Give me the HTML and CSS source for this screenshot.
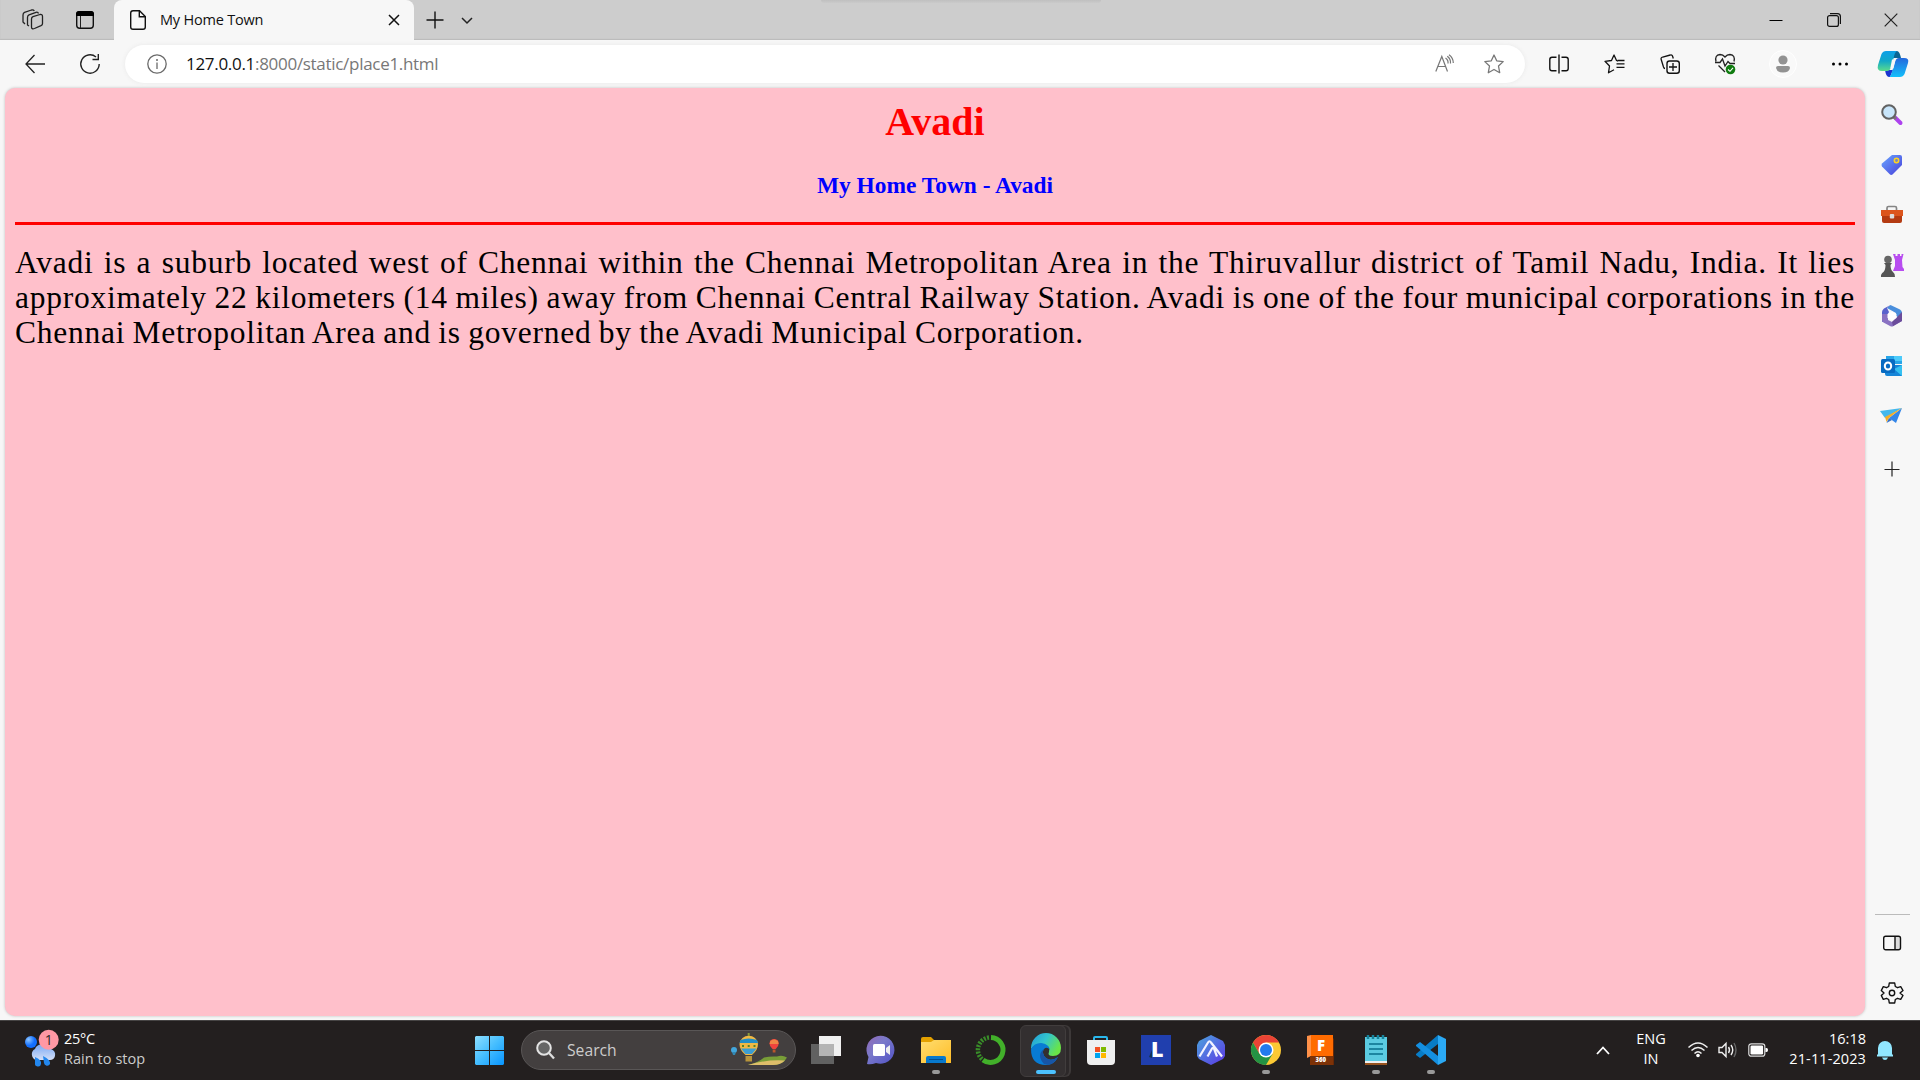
FILE: index.html
```html
<!DOCTYPE html>
<html lang="en">
<head>
<meta charset="utf-8">
<title>My Home Town</title>
<link rel="stylesheet" href="styles.css">
</head>
<body>
<div class="desktop">
  <header class="tabbar">
    <svg class="ic workspaces" width="22" height="22" viewBox="0 0 22 22"><g fill="none" stroke="#222" stroke-width="1.3" stroke-linejoin="round"><path d="M9.500 10Q9.500 8.300 11 7.700L18 5.500Q20.500 5 20.500 7.500V14.500Q20.500 16 19 16.700L12.500 19.500Q9.500 20.500 9.500 18Z"/><path d="M7 17 5.500 16V8.500Q5.500 6.500 7 5.800L14 3.300Q16 2.800 16.500 4.500M3 15 1 13V6Q1 4 2.500 3.300L9.500 1Q11.500.500 12.300 2"/></g></svg>
    <svg class="ic tabactions" width="20" height="20" viewBox="0 0 20 20"><rect x="1.700" y="1.700" width="16.600" height="16.600" rx="3" fill="none" stroke="#111" stroke-width="1.400"/><path d="M1 6V4Q1 1 4 1H16Q19 1 19 4V6Z"/><path d="M5.500 6V18" stroke="#222"/></svg>
    <div class="tab">
      <svg class="ic" width="18" height="22" viewBox="0 0 18 22"><path d="M4 1.700H10.500L16.300 7.500V18Q16.300 20.300 14 20.300H4Q1.700 20.300 1.700 18V4Q1.700 1.700 4 1.700ZM10.300 2V7.700H16" fill="none" stroke="#111" stroke-width="1.400"/></svg>
      <span class="tab-title">My Home Town</span>
      <svg class="ic" width="12" height="12" viewBox="0 0 12 12"><path d="M1 1 11 11M11 1 1 11" stroke="#111" stroke-width="1.500"/></svg>
    </div>
    <svg class="ic newtab" width="18" height="18" viewBox="0 0 18 18"><path d="M9 .500V17.500M.500 9H17.500" stroke="#111" stroke-width="1.400"/></svg>
    <svg class="ic tablist" width="12" height="8" viewBox="0 0 12 8"><path d="M1 1 6 6 11 1" fill="none" stroke="#222" stroke-width="1.500"/></svg>
    <div class="topshade"></div>
    <div class="wincontrols">
      <svg width="14" height="14" viewBox="0 0 14 14"><path d="M.500 7.500H13.500" stroke="#000"/></svg>
      <svg width="14" height="14" viewBox="0 0 14 14"><rect x=".600" y="2.600" width="10.800" height="10.800" rx="2" fill="none" stroke="#111" stroke-width="1.200"/><path d="M3 .600H10.500Q13.400.600 13.400 3.500V11" fill="none" stroke="#111" stroke-width="1.200"/></svg>
      <svg width="14" height="14" viewBox="0 0 14 14"><path d="M.700.700 13.300 13.300M13.300.700.700 13.300" stroke="#222" stroke-width="1.200"/></svg>
    </div>
  </header>

  <nav class="toolbar">
    <svg class="ic back" width="20" height="20" viewBox="0 0 20 20"><path d="M20 10H1M9.500 1 1 10 9.500 19" fill="none" stroke="#222" stroke-width="1.300"/></svg>
    <svg class="ic refresh" width="22" height="22" viewBox="0 0 22 22"><path d="M20.200 11A9.200 9.200 0 1 1 17 4M19.300 1V6.500H13.500" fill="none" stroke="#222" stroke-width="1.400"/></svg>
    <div class="address">
      <svg class="ic" width="20" height="20" viewBox="0 0 20 20"><circle cx="10" cy="10" r="9.200" fill="none" stroke="#6a6a6a" stroke-width="1.300"/><path d="M10 8.500V15" stroke="#6a6a6a" stroke-width="1.300"/><circle cx="10" cy="6" r="1" fill="#6a6a6a"/></svg>
      <span class="url"><b>127.0.0.1</b>:8000/static/place1.html</span>
      <svg class="ic" width="20" height="20" viewBox="0 0 20 20"><g fill="none" stroke="#777" stroke-width="1.200"><path d="M1.800 17.500 7.800 2.500 13.500 17.500M4 12.500H11.600M11.500 4Q14.500 6 14 9.500M13.300 2.200Q17 5 16.500 9.500M15 .800Q19.300 4 19.300 9"/></g></svg>
      <svg class="ic star" width="20" height="20" viewBox="0 0 20 20"><path d="M10 1 12.700 6.800 19.200 7.600 14.500 12 15.700 18.700 10 15.500 4.300 18.700 5.500 12 .800 7.600 7.300 6.800Z" fill="none" stroke="#777" stroke-width="1.300" stroke-linejoin="round"/></svg>
    </div>
    <div class="tools">
      <svg width="20" height="20" viewBox="0 0 20 20"><path d="M7.500 3.200H3Q.800 3.200.800 5.500V14.500Q.800 16.800 3 16.800H7.500M12.500 3.200H17Q19.200 3.200 19.200 5.500V14.500Q19.200 16.800 17 16.800H12.500M10 .500V19.500" fill="none" stroke="#111" stroke-width="1.400"/></svg>
      <svg width="20" height="20" viewBox="0 0 20 20"><path d="M14 7.200 12.500 6.500 10 1 7.500 6.500 1 7.300 5.500 12 4.500 18.800 10 15.800M12.500 9.800H20.500M12.500 13.300H20.500M13.500 6.500H20.500" fill="none" stroke="#111" stroke-width="1.300" stroke-linejoin="round"/></svg>
      <svg width="20" height="20" viewBox="0 0 20 20"><path d="M13.300 4.500 12.500 2Q12 .500 10.300 1L2.700 3Q.500 3.700 1.200 5.500L3.500 13Q4 14.500 5 14.500" fill="none" stroke="#111" stroke-width="1.300"/><rect x="7" y="7" width="12.300" height="12.300" rx="2.500" fill="none" stroke="#111" stroke-width="1.400"/><path d="M13 9V17M9 13H17" stroke="#111" stroke-width="1.300"/></svg>
      <svg width="20" height="22" viewBox="0 0 20 22"><path d="M1 8.500Q-.500 2 5 1.500 8 1.500 10 4 12 1.500 15 1.500 20.500 2 19 8.500M0 9.500H5L7.500 6 10 13 13 8.500 15 10.500H20M3.500 12.500 10 19" fill="none" stroke="#222" stroke-width="1.300"/><circle cx="15.500" cy="16.500" r="4.800" fill="#107c10"/><path d="M13 16.500 15 18.300 18 14.800" fill="none" stroke="#fff" stroke-width="1.100"/></svg>
      <svg class="profile" width="28" height="28" viewBox="0 0 28 28"><circle cx="14" cy="14" r="13.500" fill="#f9f9f9" stroke="#fff"/><circle cx="14" cy="10" r="4.600" fill="#929292"/><path d="M7 18Q7 16 9 16H19Q21 16 21 18 20 22.500 14 22.500 8 22.500 7 18Z" fill="#929292"/></svg>
      <svg class="more" width="18" height="6" viewBox="0 0 18 6"><circle cx="2.500" cy="3" r="1.500"/><circle cx="9" cy="3" r="1.500"/><circle cx="15.500" cy="3" r="1.500"/></svg>
    </div>
    <svg class="ic copilot" width="32" height="28" viewBox="0 0 32 28"><defs><linearGradient id="cpa" x1="0" y1="0" x2="0" y2="1"><stop stop-color="#0d9fe8"/><stop offset=".500" stop-color="#12a8c8"/><stop offset="1" stop-color="#5bdc8c"/></linearGradient><linearGradient id="cpb" x1="0" y1="0" x2="0" y2="1"><stop stop-color="#2468dc"/><stop offset="1" stop-color="#14c0fb"/></linearGradient></defs><path d="M15 1H20Q22.500 1 24 8H16Z" fill="#0a6594"/><path d="M8 20H16L13 27H12Q9 27 8 20Z" fill="#1a35cf"/><path d="M20 1H9Q6 1 4.500 4L1 15Q-.500 21 5 21H10Q13 21 14 17L16.500 9Q17.500 2 20 1Z" fill="url(#cpa)"/><path d="M12 27H23Q26 27 27.500 24L31 13Q32.500 8 27 8H22Q19 8 18 12L15.500 20Q14 26.500 12 27Z" fill="url(#cpb)"/><path d="M15 9.500H18.500L16.500 18.500H13.300Z" fill="#f7f7f7"/></svg>
  </nav>

  <div class="workspace">
    <main class="page">
      <h1>Avadi</h1>
      <h3>My Home Town - Avadi</h3>
      <hr>
      <p class="story"><span class="line">Avadi is a suburb located west of Chennai within the Chennai Metropolitan Area in the Thiruvallur district of Tamil Nadu, India. It lies</span> <span class="line">approximately 22 kilometers (14 miles) away from Chennai Central Railway Station. Avadi is one of the four municipal corporations in the</span> <span class="line last">Chennai Metropolitan Area and is governed by the Avadi Municipal Corporation.</span></p>
    </main>
    <aside class="sidebar">
      <svg width="24" height="24" viewBox="0 0 24 24"><path d="M14.500 14 20.500 20" stroke="#ad42ee" stroke-width="4" stroke-linecap="round"/><path d="M13 13 16 16" stroke="#777" stroke-width="3"/><circle cx="9" cy="9" r="6.800" fill="#c8e5fa" stroke="#626262" stroke-width="2"/></svg>
      <svg width="24" height="24" viewBox="0 0 24 24"><defs><linearGradient id="tg" x1="0" y1="0" x2="1" y2="1"><stop stop-color="#69a7ff"/><stop offset="1" stop-color="#483eda"/></linearGradient></defs><path d="M12 2 20 2Q22 2 22 4V12L12.500 21.500Q11 22.500 9.500 21L2 13.500Q1 12 2 10.500Z" fill="url(#tg)"/><circle cx="16.500" cy="7.500" r="2.200" fill="#7888bc" stroke="#ffd321" stroke-width="1.500"/></svg>
      <svg width="24" height="24" viewBox="0 0 24 24"><path d="M7 8V5Q7 3.500 8.500 3.500H15Q16.500 3.500 16.500 5V8" fill="none" stroke="#858585" stroke-width="1.700"/><path d="M1 7H23V13H1Z" fill="#dc551d"/><path d="M2 13H22V18Q22 20 20 20H4Q2 20 2 18Z" fill="#b43b12"/><rect x="9.800" y="11" width="4.400" height="4.500" rx="1" fill="#ddd"/></svg>
      <svg width="24" height="24" viewBox="0 0 24 24"><path d="M13 0H15.500V2H17.500V0H20V2H21.500V0H23.500L22 6 22.500 13 24 15V17H13L15 12V6Z" fill="#b84df0"/><circle cx="8" cy="5.500" r="3.800" fill="#666"/><path d="M4 9H12L10.500 11Q10.500 16 13 18 15.500 20 15 23H1Q.500 20 3.500 18 5.500 16 5.500 11Z" fill="#555"/></svg>
      <svg width="24" height="24" viewBox="0 0 24 24"><path d="M10.500 1 20 5.500Q22 6.500 22 9V15L16 12V9L7 4Z" fill="#4a8fdc"/><path d="M10.500 1 7 4 9 8 8 10V16L2 18V8Q2 6 4 4.500Z" fill="#5a62cc"/><path d="M2 10 8 10V16L12 18 22 11V17L13.500 22Q12 23 10 22L3.500 18.500Q2 17.500 2 16Z" fill="#8a72c2"/><path d="M22 8V17L13 22 12 18 16 14Z" fill="#6b4c9b"/><path d="m12 7.500 4.500 2.600V14L12 16.500 7.500 14V10.100Z" fill="#fff"/></svg>
      <svg width="24" height="24" viewBox="0 0 24 24"><path d="M6 2H22V10H6Z" fill="#27a5e8"/><path d="M14 2H22V7H14Z" fill="#4bcafa"/><path d="M5 11H22V22H7Q5 22 5 20Z" fill="#1685d8"/><path d="M14 15 22 11V22Z" fill="#35c1f1"/><rect x="1" y="5" width="14" height="14" rx="1.500" fill="#086bc2"/><ellipse cx="8" cy="12" rx="3.200" ry="3.500" fill="none" stroke="#fff" stroke-width="2"/></svg>
      <svg width="24" height="24" viewBox="0 0 24 24"><path d="M0 7 22 4 5 14Z" fill="#43b8ed"/><path d="M22 4 16 19 9 14Z" fill="#3386e9"/><path d="M22 4 5 13 6.500 18 9 14Z" fill="#f6ae27"/><path d="m9 14 3 2-5.500 3Z" fill="#3772c7"/></svg>
      <svg class="add" width="16" height="16" viewBox="0 0 16 16"><path d="M8 .500V15.500M.500 8.500H15.500" stroke="#222" stroke-width="1.200"/></svg>
      <div class="sidebar-end">
        <svg width="20" height="20" viewBox="0 0 20 20"><path d="M13 4H18V16H13Z" fill="#ddd"/><rect x="1.700" y="3.200" width="16.800" height="13.600" rx="2" fill="none" stroke="#111" stroke-width="1.400"/><path d="M13 3V17" stroke="#111" stroke-width="1.400"/></svg>
        <svg width="22" height="22" viewBox="0 0 22 22"><path d="M8.300 1H13.700L14.300 4.500 16.500 5.700 19.700 4.600 22 8.500 19 11 22 13.500 19.700 17.400 16.500 16.300 14.300 17.500 13.700 21H8.300L7.700 17.500 5.500 16.300 2.300 17.400.300 13.500 3 11 .300 8.500 2.300 4.600 5.500 5.700 7.700 4.500Z" fill="none" stroke="#111" stroke-width="1.400" stroke-linejoin="round"/><circle cx="11" cy="11" r="2.700" fill="none" stroke="#111" stroke-width="1.400"/></svg>
      </div>
    </aside>
  </div>

  <footer class="taskbar">
    <div class="weather">
      <svg width="36" height="40" viewBox="0 0 36 40"><defs><radialGradient id="blue" cx=".3" cy=".3"><stop stop-color="#8dc5ff"/><stop offset="1" stop-color="#126fff"/></radialGradient><linearGradient id="cloud" x1="0" y1="0" x2="0" y2="1"><stop stop-color="#7aa9f5"/><stop offset="1" stop-color="#d4dff6"/></linearGradient></defs><circle cx="7" cy="13" r="6" fill="url(#blue)"/><path d="M12 31A6 6 0 0 1 11 20Q13 14 21 16 27 17 27 20 32 22 31 27 30 31 26 31Z" fill="url(#cloud)"/><path d="M11 28Q18 31 17 35A3 3 0 0 1 11 34ZM19 27Q27 31 26 35A3.200 3.200 0 0 1 20 34Z" fill="#2387ee"/><circle cx="24.700" cy="10.700" r="10" fill="#ff98a4"/><text x="24.800" y="16" text-anchor="middle" font-size="14" fill="#30292a">1</text></svg>
      <div class="weather-text"><span>25°C</span><span class="dim">Rain to stop</span></div>
    </div>
    <svg class="start" width="29" height="29" viewBox="0 0 29 29"><defs><linearGradient id="win" x1="0" y1="0" x2="1" y2="1"><stop stop-color="#8ddfff"/><stop offset=".5" stop-color="#44bdff"/><stop offset="1" stop-color="#0895ff"/></linearGradient></defs><path d="M1 0H14V14H0V1ZM15 0H28L29 1V14H15ZM0 15H14V29H1L0 28ZM15 15H29V28L28 29H15Z" fill="url(#win)"/></svg>
    <div class="search">
      <svg width="19" height="20" viewBox="0 0 19 20"><circle cx="8" cy="8" r="6.800" fill="#666" stroke="#e4e4e4" stroke-width="2"/><path d="M13 13 18 18.500" stroke="#ddd" stroke-width="2.300"/></svg>
      <span>Search</span>
      <svg class="balloons" width="58" height="34" viewBox="0 0 58 34"><path d="M18 32Q29 29 34 24.500 40 23 47 23.500 52 21.500 57 24.500 53 32 43 32Z" fill="#789d37"/><path d="M18 32Q38 26 55 27.500 50 32 43 32Z" fill="#ddbd6a"/><circle cx="4" cy="17" r="3" fill="#42a7dd"/><path d="M2 19H6L5 22H3Z" fill="#3388b3"/><path d="M9.500 11A9.300 9.300 0 0 1 28 11Q28 17 22 22H15.500Q9.500 17 9.500 11Z" fill="#efb844"/><path d="M17.700 0H19.700V3H17.700Z" fill="#8a9a3a"/><path d="M10.500 7Q18.500 4 27 7L28 10H9.500Z" fill="#218dc6"/><path d="M11 15.500H26.500L22 21H15.500Z" fill="#3b9dd3"/><path d="M12 12H14V14H12ZM17.700 12H19.700V14H17.700ZM23.500 12H25.500V14H23.500Z" fill="#56832b"/><path d="M15.500 23H22V28.500H15.500Z" fill="#b7943b"/><path d="M39.500 10.500A4.600 4.600 0 0 1 48.700 10.500Q48.700 13.500 45.700 16H42.500Q39.500 13.500 39.500 10.500Z" fill="#ee433d"/><path d="M40.300 8Q44 5 48 8L48.500 11H39.700Z" fill="#ef8545"/><path d="M42.700 16.500H45.500V19.500H42.700Z" fill="#b9552b"/></svg>
    </div>
    <div class="apps">
      <div class="app"><svg width="30" height="30" viewBox="0 0 30 30"><path d="M8 1H30V21H8Z" fill="#f0f0f0"/><path d="M0 9H23V29H0Z" fill="#616161"/><path d="M8 9H23V21H8Z" fill="#b4b4b4"/></svg></div>
      <div class="app"><svg width="30" height="30" viewBox="0 0 30 30"><defs><linearGradient id="chat" x1="0" y1="0" x2="1" y2="1"><stop stop-color="#9369b5"/><stop offset=".4" stop-color="#7a79ca"/><stop offset="1" stop-color="#5051c6"/></linearGradient></defs><path d="M1 29 2.500 22A14 14 0 1 1 10 28Q5 30 1 29Z" fill="url(#chat)"/><rect x="7" y="9" width="12" height="12" rx="1.500" fill="#fff"/><path d="M20 13 24 10V20L20 17Z" fill="#eee"/></svg></div>
      <div class="app running"><svg width="30" height="30" viewBox="0 0 30 30"><defs><linearGradient id="folder" x1="0" y1="0" x2="1" y2="1"><stop stop-color="#ffdd70"/><stop offset="1" stop-color="#ffbd27"/></linearGradient></defs><path d="M0 4Q0 2 2 2H10L13 5V10H0Z" fill="#e4a100"/><path d="M0 7H10L13 5H30V28H0Z" fill="url(#folder)"/><path d="M5 28V23Q5 21 7 21H23Q25 21 25 23V28Z" fill="#0879cd"/><path d="M8 24.500H22" stroke="#034f91"/></svg></div>
      <div class="app"><svg width="30" height="30" viewBox="0 0 30 30"><path d="M15 2.500A12.500 12.500 0 1 1 7 25" fill="none" stroke="#42b02a" stroke-width="5"/><path d="M13 2.500A12.500 12.500 0 0 0 7 25" fill="none" stroke="#398e29" stroke-width="4.500" stroke-dasharray="2 1.300"/></svg></div>
      <div class="app running active"><svg width="30" height="30" viewBox="0 0 30 30"><defs><linearGradient id="eg" x1="0" y1="0" x2="1" y2=".5"><stop stop-color="#219ad9"/><stop offset=".5" stop-color="#32c5ce"/><stop offset="1" stop-color="#69e448"/></linearGradient></defs><path d="M0 13A15 15 0 0 1 30 13Q30 21 22 21 16 21 18 17 20 11 12 9 5 8 0 14Z" fill="url(#eg)"/><path d="M0 14Q3 8 10 8 18 9 19 15 16 11 13 14 10 18 15 23 20 27 27 22 23 30 15 30 0 30 0 14Z" fill="#087bd4"/><path d="M13 14Q5 20 13 29 22 32 27 22 20 27 15 23 10 18 13 14Z" fill="#1755a5"/></svg></div>
      <div class="app"><svg width="30" height="30" viewBox="0 0 30 30"><path d="M8 6V3Q8 2 9 2H20Q21 2 21 3V6" fill="none" stroke="#2ab8ed" stroke-width="2"/><path d="M1 5H29V26Q29 30 25 30H5Q1 30 1 26Z" fill="#efefef"/><path d="M9 12H14V17H9Z" fill="#f25022"/><path d="M15 12H20V17H15Z" fill="#7fba00"/><path d="M9 18H14V23H9Z" fill="#00a4ef"/><path d="M15 18H20V23H15Z" fill="#ffb900"/></svg></div>
      <div class="app"><svg width="30" height="30" viewBox="0 0 30 30"><path d="M0 0H30V30H0Z" fill="#203fae"/><path d="M11 15 8 22 11 23Z" fill="#123453"/><text class="heavy" x="10" y="22" font-size="21.500" fill="#fff">L</text></svg></div>
      <div class="app"><svg width="30" height="30" viewBox="0 0 30 30"><defs><linearGradient id="ai" x1="0" y1="0" x2="1" y2="1"><stop stop-color="#4ba5dd"/><stop offset="1" stop-color="#5b36e5"/></linearGradient></defs><path d="M15 0 27 6 29 10V21L27 24 15 30 3 24 1 21V10L3 6Z" fill="url(#ai)"/><path d="M3.500 21.500 12 7.500Q13.500 5 15 7.500L26 21.500M11.500 21.500 16 13.500Q17 12 18 13.500L21 21.500" fill="none" stroke="#f2f2ff" stroke-width="2.200"/></svg></div>
      <div class="app running"><svg width="30" height="30" viewBox="0 0 30 30"><circle cx="15" cy="15" r="15" fill="#fcc934"/><path d="M2 7.500A15 15 0 0 1 28 7.500H15L8.500 19Z" fill="#ea4335"/><path d="M2 7.500A15 15 0 0 0 15 30L21.500 19H8.500Z" fill="#249344"/><circle cx="15" cy="15" r="7.500" fill="#fff"/><circle cx="15" cy="15" r="6" fill="#237aed"/></svg></div>
      <div class="app"><svg width="30" height="30" viewBox="0 0 30 30"><path d="M1 1 5 0V21L1 23Z" fill="#ff9149"/><path d="M5 0H27V21H5Z" fill="#ff6b00"/><path d="M4 21H28V30H4Z" fill="#7d3207"/><path d="M27 3 28 4V30H27Z" fill="#682806"/><text class="heavy" x="11" y="16" font-size="15" fill="#fff">F</text><text class="heavy" x="9.500" y="27.300" font-size="6" fill="#fff">360</text></svg></div>
      <div class="app running"><svg width="30" height="30" viewBox="0 0 30 30"><path d="M4 25H26V30H4Z" fill="#97521d"/><path d="M4 2H26V27H4Z" fill="#5bcbe1"/><path d="M4 26H26V28H4Z" fill="#eee"/><path d="M8 9H22M8 14H22M8 19H22" stroke="#09708c" stroke-width="1.700"/><path d="M7 0V4M12 0V4M17 0V4M22 0V4" stroke="#16839c" stroke-width="2.500"/></svg></div>
      <div class="app running"><svg width="30" height="30" viewBox="0 0 30 30"><path d="M22 0 30 4V26L22 30Z" fill="#2ba9f4"/><path d="M22 0V9L4 23 0 20V19Z" fill="#087cc6"/><path d="M0 10 4 7 22 21V30L0 11Z" fill="#148fe0"/></svg></div>
    </div>
    <div class="tray">
      <svg class="chev" width="14" height="9" viewBox="0 0 14 9"><path d="M1 8 7 1.500 13 8" fill="none" stroke="#fff" stroke-width="1.800"/></svg>
      <div class="lang"><span>ENG</span><span>IN</span></div>
      <svg class="wifi" width="20" height="16" viewBox="0 0 20 16"><g fill="none" stroke="#eee" stroke-width="1.500"><path d="M.500 5.500Q10-3.500 19.500 5.500M3.500 8.500Q10 2.500 16.500 8.500M6.500 11.500Q10 8 13.500 11.500"/></g><circle cx="10" cy="13.500" r="1.800" fill="#fff"/></svg>
      <svg class="speaker" width="20" height="18" viewBox="0 0 20 18"><g fill="none" stroke="#eee" stroke-width="1.400"><path d="M1 6.500H4L8 2.500V15.500L4 11.500H1ZM10.500 6Q12.500 9 10.500 12M13 4Q16.500 9 13 14"/><path d="M16 2Q20 9 16 16" stroke="#666"/></g></svg>
      <svg class="battery" width="20" height="14" viewBox="0 0 20 14"><rect x=".800" y=".800" width="16" height="12.400" rx="2.500" fill="none" stroke="#ddd" stroke-width="1.200"/><rect x="2.500" y="2.500" width="12.600" height="9" rx="1.300" fill="#fff"/><path d="M17.500 5H18.500Q20 5 20 7T18.500 9H17.500Z" fill="#fff"/></svg>
      <div class="clock"><span>16:18</span><span class="date">21-11-2023</span></div>
      <svg class="bell" width="18" height="20" viewBox="0 0 18 20"><path d="M2 14V8A7 7 0 0 1 16 8V14L17 15V16.500H1V15ZM6 17.500H12Q11 20 9 20T6 17.500Z" fill="#91e7ff"/></svg>
    </div>
  </footer>
</div>
</body>
</html>
```
FILE: styles.css
```css
* { box-sizing: border-box; }
body {
  margin: 0;
  font-family: "Open Sans", "Noto Sans", sans-serif;
  color: #111;
  overflow: hidden;
}
svg { display: block; flex: none; overflow: visible; }
.desktop {
  width: 1920px;
  height: 1080px;
  display: flex;
  flex-direction: column;
  background: #f7f7f7;
}

/* tab strip */
.tabbar {
  height: 40px;
  flex: none;
  display: flex;
  align-items: center;
  background: #cdcdcd;
  box-shadow: inset 0 -1px 1px #bbb;
}
.workspaces { margin-left: 22px; }
.tabactions { margin-left: 31px; }
.tab {
  width: 300px;
  height: 40px;
  margin-left: 19px;
  padding: 0 14px 0 15px;
  display: flex;
  align-items: center;
  background: #f7f7f7;
  border-radius: 8px 8px 0 0;
}
.tab-title {
  flex: 1;
  margin-left: 13px;
  font-size: 14.5px;
  line-height: 20px;
  letter-spacing: -0.2px;
  white-space: nowrap;
}
.newtab { margin-left: 12px; }
.tablist { margin: 2px 0 0 17px; }
.topshade {
  width: 280px;
  height: 3px;
  margin-left: 348px;
  align-self: flex-start;
  border-radius: 0 0 8px 8px;
  background: linear-gradient(#c0c0c0, #cacaca);
}
.wincontrols { display: flex; gap: 43.5px; margin: 0 22px 0 auto; }

/* navigation row */
.toolbar { height: 48px; flex: none; display: flex; align-items: center; }
.back { margin-left: 25px; }
.refresh { margin-left: 34px; }
.address {
  width: 1400px;
  height: 38px;
  margin-left: 24px;
  padding: 0 21px 0 22px;
  display: flex;
  align-items: center;
  background: #fff;
  border-radius: 19px;
  box-shadow: 0 0 4px #e8e8e8;
}
.url {
  flex: 1;
  margin: -1px 0 0 19px;
  font-size: 17px;
  line-height: 22px;
  letter-spacing: -0.3px;
  color: #777;
}
.url b { font-weight: 400; color: #111; }
.star { margin-left: 30px; }
.tools { display: flex; align-items: center; gap: 35.3px; margin-left: 24px; }
.profile { margin-left: -1px; }
.more { margin-left: -1px; }
.copilot { margin-left: 28px; }

/* page and sidebar */
.workspace { height: 932px; flex: none; display: flex; }
.page {
  width: 1860px;
  height: 928px;
  margin-left: 5px;
  padding: 0 10px;
  background: #ffc0cb;
  border-radius: 10px;
  box-shadow: 0 0 3px #bbb;
  font-family: "Liberation Serif", serif;
  overflow: hidden;
}
.page h1 {
  margin: 11px 0 0;
  font-size: 40px;
  line-height: 46px;
  text-align: center;
  color: #f00;
}
.page h3 {
  margin: 27px 0 0;
  font-size: 23.4px;
  line-height: 26px;
  text-align: center;
  color: #00f;
}
.page hr { height: 3px; margin: 24px 0 0; border: 0; background: #f00; }
.story {
  margin: 20px 0 0;
  font-family: "Liberation Serif", serif;
  font-size: 31.5px;
  line-height: 35px;
  color: #000;
}
.line {
  display: block;
  white-space: nowrap;
  text-align: justify;
  text-align-last: justify;
  letter-spacing: 0.75px;
  word-spacing: -3px;
}
.line.last { width: 1069px; }
.sidebar {
  width: 54px;
  display: flex;
  flex-direction: column;
  align-items: center;
  gap: 26.2px;
  padding-top: 15px;
}
.sidebar .add { margin-top: 7px; }
.sidebar-end {
  width: 35px;
  margin: auto 0 16px;
  padding-top: 18px;
  border-top: 1px solid #bbb;
  display: flex;
  flex-direction: column;
  align-items: center;
  gap: 29px;
}

/* taskbar */
.taskbar {
  height: 60px;
  flex: none;
  display: flex;
  align-items: center;
  background: #231f1f;
  border-top: 1px solid #464444;
  padding-bottom: 1px;
  color: #fff;
  font-size: 14.5px;
  line-height: 20px;
}
.weather { width: 451px; margin-left: 24px; display: flex; }
.weather > svg { margin-top: -1px; }
.weather-text { display: flex; flex-direction: column; margin: -1px 0 1px 4px; letter-spacing: -0.3px; }
.dim { color: #ccc; letter-spacing: 0.05px; }
.search {
  width: 275px;
  height: 40px;
  margin-left: 17px;
  padding: 0 7px 0 14px;
  display: flex;
  align-items: center;
  border: 1px solid #595656;
  border-radius: 20px;
  background: #433f3f;
  color: #ccc;
  font-size: 15.7px;
}
.search span { margin-left: 12px; }
.balloons { margin-left: auto; }
.apps { display: flex; height: 58px; margin-left: 2px; }
.app {
  width: 55px;
  display: flex;
  align-items: center;
  justify-content: center;
  position: relative;
}
.app > svg { position: relative; }
.running::after {
  content: "";
  position: absolute;
  left: 24px;
  top: 49px;
  width: 8px;
  height: 4px;
  border-radius: 2px;
  background: #999;
}
.active::before {
  content: "";
  position: absolute;
  left: 2px;
  top: 4px;
  width: 44px;
  height: 50px;
  border: 1px solid #413d3d;
  border-radius: 6px;
  background: #332f30;
  box-shadow: 4px 0 0 -1px #2c2829, 5px 0 0 #3d3939;
}
.active::after { left: 18px; width: 20px; background: #4cc2ff; }
.heavy { font-family: "Open Sans", sans-serif; font-weight: 800; }
.tray { display: flex; align-items: center; margin-left: auto; padding-right: 26px; }
.lang, .clock { display: flex; flex-direction: column; }
.lang { width: 40px; align-items: center; margin: -1px 0 1px 21px; }
.wifi { margin-left: 17px; }
.speaker { margin-left: 10px; }
.battery { margin-left: 10px; }
.clock { width: 98px; align-items: flex-end; margin: -1px 0 1px; }
.date { letter-spacing: 0.1px; }
.bell { margin-left: 10px; }
```
